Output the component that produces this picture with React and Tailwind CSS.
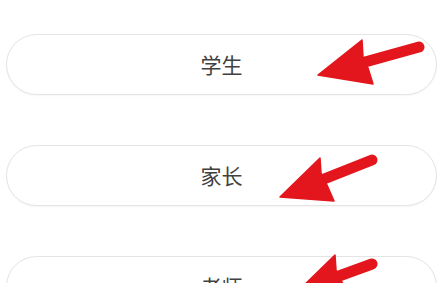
import React from "react";

const roles = [
  {
    label: "学生",
    head: "312,41 356,6 357,23 362,34 367,50",
    shaft: [359, 28, 413, 13],
  },
  {
    label: "家长",
    head: "274,52 314,13 315,28 321,40 328,56",
    shaft: [318, 34, 366, 15],
  },
  {
    label: "老师",
    head: "289,38 329,-1 330,14 336,26 343,42",
    shaft: [333, 20, 366, 8],
  },
];

const Arrow = ({ head, shaft }) => (
  <svg
    className="absolute left-0 top-0 overflow-visible pointer-events-none"
    width="431"
    height="61"
    viewBox="0 0 431 61"
  >
    <line
      x1={shaft[0]}
      y1={shaft[1]}
      x2={shaft[2]}
      y2={shaft[3]}
      stroke="#e3161d"
      strokeWidth="11"
      strokeLinecap="round"
    />
    <polygon points={head} fill="#e3161d" stroke="#e3161d" strokeWidth="1.5" strokeLinejoin="round" />
  </svg>
);

const App = () => {
  return (
    <div className="w-[447px] h-[283px] overflow-hidden bg-white">
      <div className="flex flex-col gap-[50px] pt-[34px] pl-[6px] pr-[10px]">
        {roles.map((r) => (
          <div key={r.label} className="relative">
            <button className="w-full h-[61px] rounded-full border border-[#e4e4e4] bg-white shadow-[0_1px_2px_rgba(0,0,0,0.04)] flex items-center justify-center text-[21px] leading-none text-[#404040] font-['Noto_Sans_CJK_SC',sans-serif]">
              {r.label}
            </button>
            <Arrow head={r.head} shaft={r.shaft} />
          </div>
        ))}
      </div>
    </div>
  );
};

export default App;
